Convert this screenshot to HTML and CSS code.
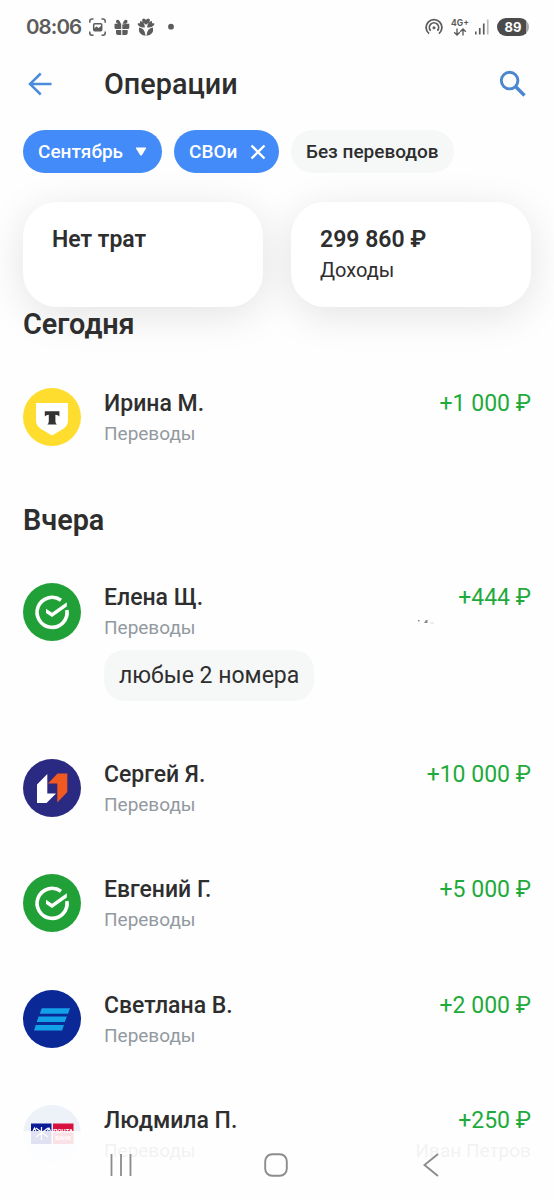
FILE: index.html
```html
<!DOCTYPE html>
<html lang="ru">
<head>
<meta charset="utf-8">
<title>Операции</title>
<link rel="stylesheet" href="styles.css">
</head>
<body>
<svg class="defs" width="0" height="0">
  <symbol id="check" viewBox="0 0 58 58">
    <path d="M38 17.300A15 15 0 1 0 43.900 27" fill="none" stroke="#fff" stroke-width="3.600"/>
    <path d="M23 25.800v4.300l6 3.900 14.800-10.400V19.300L29 29.700z" fill="#fff"/>
  </symbol>
</svg>
<div class="screen">
  <div class="status">
    <span class="clock">08:06</span>
    <svg class="status-left" width="90" height="22" viewBox="88 16 90 22" fill="#5c5c5c">
      <g fill="none" stroke="#5c5c5c" stroke-width="1.500">
        <path d="M93.500 19h-1.500q-2.200 0-2.200 2.200v1.500M101.500 19h1.500q2.200 0 2.200 2.200v1.500M93.500 35.200h-1.500q-2.200 0-2.200-2.200v-1.500M101.500 35.200h1.500q2.200 0 2.200-2.200v-1.500"/>
        <rect x="93.700" y="23.700" width="8" height="7" rx="1"/>
      </g>
      <path d="M94 28.500l2.500-2 2 1.500 2.500-2v5h-7z"/>
      <path d="M114.500 23.800h6.700v5.200h-5.200q-1.500 0-1.500-1.500zM122.300 23.800h7v3.700q0 1.500-1.500 1.500h-5.500zM116 30.100h5.200v5h-3.200q-2 0-2-2zM122.300 30.100h5.400v3q0 2-2 2h-3.400zM121.200 24.500q-6.500-1-5-4 2.800-2.500 5 4zM122.300 24.500q6.500-1 5-4-2.800-2.500-5 4z"/>
      <path d="M146 24.800q-6.500-4.500-2.500-6.300 2 0 2.500 1.500.5-1.500 2.500-1.500 4 1.800-2.500 6.300zM145 27.300q-4 1-7.200-2.300v-1.800h2.200v-2.300q4 0 5 6.400zM147 27.300q4 1 7.200-2.300v-1.800h-2.200v-2.300q-4 0-5 6.400zM145.600 35.700q-7.800-.5-6.600-8.200 5.800.5 6.600 8.200zM146.400 35.700q7.800-.5 6.600-8.200-5.800.5-6.600 8.200z"/>
      <circle cx="171" cy="26.700" r="2.900"/>
    </svg>
    <div class="status-right">
      <svg width="18" height="18" viewBox="0 0 18 18" fill="none" stroke="#5c5c5c" stroke-width="1.800">
        <path d="M4 15.600A7.900 7.900 0 1 1 14 15.600M5.700 12.700A4.600 4.600 0 1 1 12.300 12.700"/>
        <circle cx="9" cy="9.800" r="1.500" fill="#5c5c5c" stroke="none"/>
      </svg>
      <div class="net"><span>4G+</span>
        <svg width="14" height="8" viewBox="0 0 14 8" fill="none" stroke="#5c5c5c" stroke-width="1.400"><path d="M4 .5v6M1.200 4.200L4 7l2.800-2.800M10 7.500V1.200M7.200 3.800L10 1l2.800 2.800"/></svg>
      </div>
      <svg class="bars" width="14" height="16" viewBox="0 0 14 16" fill="#5c5c5c"><path d="M0 12.500h1.600v3H0zM3.900 9h1.700v6.500H3.900zM7.900 4.500h1.700v11H7.900z"/><path d="M11.900.5h1.700v15h-1.700z" fill="#bbb"/></svg>
      <span class="battery">89</span>
    </div>
  </div>

  <header class="bar">
    <svg class="back" width="24" height="24" viewBox="0 0 24 24" fill="none" stroke="#4b8bdc" stroke-width="2.500"><path d="M23.500 12H2.500M12.700 1.500L2 12l10.700 10.500"/></svg>
    <h1>Операции</h1>
    <svg class="search" width="28" height="28" viewBox="0 0 28 28" fill="none" stroke="#4b86cf" stroke-width="2.900"><circle cx="10.600" cy="10.600" r="8.300"/><path d="M16.500 16.500l9 9" stroke-width="3.300"/></svg>
  </header>

  <div class="chips">
    <span class="chip on month">Сентябрь<svg width="12" height="9" viewBox="0 0 12 9" fill="#fff"><path d="M1.500.5h9q1 0 .5 1L7 8q-1 1-2 0L1 1.500q-.5-1 .5-1z"/></svg></span>
    <span class="chip on own">СВОи<svg width="16" height="16" viewBox="0 0 16 16" stroke="#fff" stroke-width="2.400"><path d="M1.500 1.500l13 13M14.500 1.500l-13 13"/></svg></span>
    <span class="chip">Без переводов</span>
  </div>

  <div class="cards">
    <div class="card"><b>Нет трат</b></div>
    <div class="card"><b>299 860 ₽</b><span>Доходы</span></div>
  </div>

  <h2 class="today">Сегодня</h2>
  <div class="row first">
    <svg class="avatar" viewBox="0 0 58 58"><circle cx="29" cy="29" r="29" fill="#fedd2e"/><path d="M13 15h32v17q0 6-5 9L29 47.500 18 41Q13 38 13 32z" fill="#fff"/><path d="M21.800 23.300h14.600v5.200q-1.300-1.800-4-1.800v6.500q0 2.300 1.500 3.300h-9.600q1.500-1 1.500-3.300v-6.500q-2.700 0-4 1.800z" fill="#333"/></svg>
    <div class="info"><div class="name">Ирина М.</div><div class="kind">Переводы</div></div>
    <div class="sum">+1 000 ₽</div>
  </div>

  <h2 class="yesterday">Вчера</h2>
  <div class="row noted">
    <svg class="avatar" viewBox="0 0 58 58"><circle cx="29" cy="29" r="29" fill="#21a038"/><use href="#check"/></svg>
    <div class="info"><div class="name">Елена Щ.</div><div class="kind">Переводы</div><div class="note">любые 2 номера</div></div>
    <div class="sum">+444 ₽
      <svg class="specks" width="20" height="8" viewBox="0 0 20 8"><path d="M2 2h1.500v1.500H2zM8 5l2-3h1.500v3z" fill="#888"/><path d="M14 4.500h4v1h-4z" fill="#ddd"/></svg>
    </div>
  </div>
  <div class="row">
    <svg class="avatar" viewBox="0 0 58 58"><circle cx="29" cy="29" r="29" fill="#2b2a83"/><path d="M14 25.500L24.300 15v19.500H33L23.500 44H14z" fill="#fff"/><path d="M34.500 14.500H44.300V33L34.300 43.500V24.500H25z" fill="#f0591f"/></svg>
    <div class="info"><div class="name">Сергей Я.</div><div class="kind">Переводы</div></div>
    <div class="sum">+10 000 ₽</div>
  </div>
  <div class="row">
    <svg class="avatar" viewBox="0 0 58 58"><circle cx="29" cy="29" r="29" fill="#21a038"/><use href="#check"/></svg>
    <div class="info"><div class="name">Евгений Г.</div><div class="kind">Переводы</div></div>
    <div class="sum">+5 000 ₽</div>
  </div>
  <div class="row">
    <svg class="avatar" viewBox="0 0 58 58"><circle cx="29" cy="29" r="29" fill="#0a2896"/><path d="M18.700 18.300H47l-2 5.500H16.800zM15.600 26.600h28.200l-2 5.500H13.700zM12.800 34.900H41l-2 5.500H11z" fill="#12a0e8"/></svg>
    <div class="info"><div class="name">Светлана В.</div><div class="kind">Переводы</div></div>
    <div class="sum">+2 000 ₽</div>
  </div>
  <div class="row">
    <svg class="avatar" viewBox="0 0 58 58"><circle cx="29" cy="29" r="29" fill="#edf2f8"/><path d="M8 18.500h20.500v20.500H8z" fill="#0b1c96"/><path d="M30 18.500h20.500v20.500H30z" fill="#d8103f"/>
      <path d="M13 23l12 9M25 23l-12 9M18.500 22v13M10 26l1.500-3 1.500 3M24.500 26l1.500-3 1.500 3" fill="none" stroke="#fff" stroke-width="1.200"/>
      <text class="logo-text" x="40.200" y="27.500" text-anchor="middle">ПОЧТА</text><text class="logo-text" x="40.200" y="34.500" text-anchor="middle">БАНК</text></svg>
    <div class="info"><div class="name">Людмила П.</div><div class="kind">Переводы</div></div>
    <div class="sum">+250 ₽<div class="payer">Иван Петров</div></div>
  </div>

  <nav class="nav">
    <svg width="24" height="24" viewBox="0 0 24 24" stroke="#8c8c8c" stroke-width="1.800"><path d="M3.500 1v22M13 1v22M22.500 1v22"/></svg>
    <svg width="24" height="24" viewBox="0 0 24 24" fill="none" stroke="#8c8c8c" stroke-width="1.900"><rect x="1.200" y="1.200" width="21.600" height="21.600" rx="7"/></svg>
    <svg width="24" height="24" viewBox="0 0 24 24" fill="none" stroke="#8c8c8c" stroke-width="1.900"><path d="M18 1L4.500 12 18 23"/></svg>
  </nav>
</div>
</body>
</html>
```
FILE: styles.css
```css
* { box-sizing: border-box; }
body { margin: 0; background: #fff; color: #2e2e2f; font-family: Roboto, sans-serif; }
h1, h2 { margin: 0; }
svg { display: block; flex: none; }
.defs { position: absolute; }
.screen { position: relative; width: 554px; height: 1200px; overflow: hidden; background: #fefefe; }

.status { display: flex; align-items: center; height: 54px; padding: 0 25px 0 26px; color: #5c5c5c; }
.clock { width: 62px; font: 600 20.500px/24px Inter, sans-serif; letter-spacing: -.9px; }
.status-right { display: flex; align-items: center; margin-left: auto; }
.net { display: flex; flex-direction: column; align-items: center; width: 18px; margin-left: 8px; font: 700 8.500px/9px Inter, sans-serif; }
.bars { margin: 0 8px 0 6px; }
.battery { width: 32px; height: 18px; border-radius: 9px; background: linear-gradient(90deg, #4b4b4b 90%, #aaa 90%); color: #fff; font: 700 13px/18px Inter, sans-serif; text-align: center; }

.bar { display: flex; align-items: center; height: 60px; padding: 0 27px 0 28px; }
h1 { margin-left: 52px; font-size: 28.800px; font-weight: 500; line-height: 40px; }
.search { margin-left: auto; }

.chips { display: flex; gap: 12px; height: 59px; padding: 16px 23px 0; }
.chip { display: flex; align-items: center; height: 43px; padding: 0 15px; border-radius: 22px; background: #f6f8f8; font-size: 19px; font-weight: 500; white-space: nowrap; }
.chip.on { background: #428bf9; color: #fff; }
.chip.month { width: 139px; }
.chip.own { width: 105px; padding-right: 13px; }
.chip svg { margin-left: auto; }

.cards { display: flex; gap: 28px; padding: 29px 23px 0; }
.card { display: flex; flex: 1; flex-direction: column; height: 105px; padding: 23px 29px; border-radius: 34px; background: #fff; box-shadow: 0 8px 42px rgba(0, 0, 0, .11); }
.card b { font-size: 23px; font-weight: 600; line-height: 30px; }
.card span { font-size: 20px; line-height: 31px; }

h2 { padding-left: 23px; font-size: 28.800px; font-weight: 600; line-height: 34px; }
.today { position: relative; height: 80.700px; }
.yesterday { height: 80.600px; }

.row { display: flex; flex: none; align-items: flex-start; height: 115.400px; padding: 0 23px; }
.row.first { height: 115px; }
.row.noted { height: 175.700px; }
.avatar { width: 58px; height: 58px; }
.info { margin: 1px 0 0 23px; }
.name { font-size: 23px; font-weight: 500; line-height: 30px; }
.kind { color: #9299a0; font-size: 19px; line-height: 30px; }
.note { height: 51px; margin-top: 7px; padding: 0 15px; border-radius: 20px; background: #f6f8f8; font-size: 23px; line-height: 51px; }
.sum { position: relative; margin: 1px 0 0 auto; color: #1faa3c; font-size: 23px; line-height: 30px; text-align: right; }
.row.noted .info, .row.noted .sum { margin-top: 0; }
.payer { color: #9299a0; font-size: 19px; }
.specks { position: absolute; top: 35px; right: 95px; }
.logo-text { fill: #fff; font: 700 6px Roboto, sans-serif; }

.nav { position: absolute; right: 0; bottom: 0; left: 0; display: flex; gap: 132px; height: 69px; padding: 22px 0 0 108px; background: rgba(254, 254, 254, .88); }
```
